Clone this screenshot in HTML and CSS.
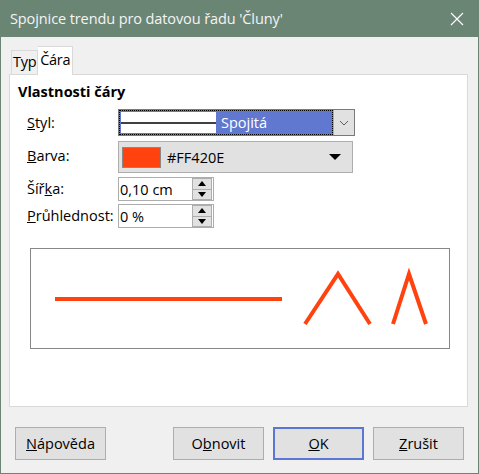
FILE: index.html
```html
<!DOCTYPE html>
<html lang="cs">
<head>
<meta charset="utf-8">
<link rel="stylesheet" href="styles.css">
</head>
<body>
<div class="window">
  <div class="titlebar">
    <span class="title">Spojnice trendu pro datovou řadu 'Čluny'</span>
    <svg class="close" width="14" height="14" viewBox="0 0 14 14"><path d="M1 1 L13 13 M13 1 L1 13" stroke="#ffffff" stroke-width="1.2" fill="none"/></svg>
  </div>
  <div class="content">
    <div class="tabs">
      <div class="tab">Typ</div>
      <div class="tab active">Čára</div>
    </div>
    <div class="panel">
      <div class="heading">Vlastnosti čáry</div>
      <div class="form">
        <label class="lbl r1"><u>S</u>tyl:</label>
        <div class="combo">
          <div class="combo-sel">
            <div class="preview-line"><span class="pl"></span></div>
            <span class="combo-text">Spojitá</span>
          </div>
          <div class="combo-btn"><svg width="10" height="6" viewBox="0 0 10 6"><path d="M1 1 L5 5 L9 1" stroke="#606060" stroke-width="1" fill="none"/></svg></div>
        </div>
        <label class="lbl r2"><u>B</u>arva:</label>
        <div class="colorbox">
          <span class="swatch"></span>
          <span class="ctext">#FF420E</span>
          <svg class="carrow" width="12" height="6" viewBox="0 0 12 6"><path d="M0 0 H12 L6 6 Z" fill="#000"/></svg>
        </div>
        <label class="lbl r3">Šíř<u>k</u>a:</label>
        <div class="spin s1">
          <span class="sval">0,10 cm</span>
          <div class="sbtns">
            <div class="sb"><svg width="8" height="5" viewBox="0 0 8 5"><path d="M0 5 H8 L4 0 Z" fill="#000"/></svg></div>
            <div class="sb"><svg width="8" height="5" viewBox="0 0 8 5"><path d="M0 0 H8 L4 5 Z" fill="#000"/></svg></div>
          </div>
        </div>
        <label class="lbl r4"><u>P</u>růhlednost:</label>
        <div class="spin">
          <span class="sval">0 %</span>
          <div class="sbtns">
            <div class="sb"><svg width="8" height="5" viewBox="0 0 8 5"><path d="M0 5 H8 L4 0 Z" fill="#000"/></svg></div>
            <div class="sb"><svg width="8" height="5" viewBox="0 0 8 5"><path d="M0 0 H8 L4 5 Z" fill="#000"/></svg></div>
          </div>
        </div>
      </div>
      <div class="previewbox">
        <svg width="418" height="99" viewBox="0 0 418 99">
          <g stroke="#FF420E" stroke-width="4" fill="none" stroke-linejoin="miter">
            <path d="M24 50 H251"/>
            <path d="M274 75 L307 25 L339 75"/>
            <path d="M362 75 L378 25 L395 75"/>
          </g>
        </svg>
      </div>
    </div>
    <div class="buttons">
      <button class="btn"><u>N</u>ápověda</button>
      <div class="spacer"></div>
      <button class="btn">O<u>b</u>novit</button>
      <button class="btn default"><u>O</u>K</button>
      <button class="btn"><u>Z</u>rušit</button>
    </div>
  </div>
</div>
</body>
</html>
```
FILE: styles.css
```css
* { box-sizing: border-box; }
html, body { margin: 0; padding: 0; }
body {
  width: 479px;
  height: 474px;
  font-family: "Open Sans", "Noto Sans", sans-serif;
  font-size: 14.5px;
  color: #000;
  background: #f0f0f0;
}
.window {
  width: 479px;
  height: 474px;
  display: flex;
  flex-direction: column;
  background: #f0f0f0;
  border: 1px solid #6b8575;
  border-top: none;
}
.titlebar {
  height: 37px;
  background: #6b8575;
  display: flex;
  align-items: center;
  padding: 0 14px 0 9px;
  flex: none;
}
.title {
  color: #f4f4f4;
  font-size: 14.5px;
  flex: 1;
  letter-spacing: -0.1px;
}
.close { display: block; }
.content {
  flex: 1;
  display: flex;
  flex-direction: column;
  padding: 9px 10px 0 8px;
}
.tabs {
  display: flex;
  align-items: flex-end;
  height: 28px;
  padding-left: 2px;
  position: relative;
  z-index: 1;
}
.tab {
  height: 24px;
  padding: 0 1px;
  border: 1px solid #d9d9d9;
  border-bottom: none;
  background: #f0f0f0;
  line-height: 22px;
  font-size: 14.5px;
  letter-spacing: -0.3px;
}
.tab.active {
  height: 29px;
  background: #ffffff;
  border-left: none;
  padding: 0 2px 0 2px;
  line-height: 26px;
  margin-bottom: -1px;
}
.panel {
  height: 333px;
  background: #ffffff;
  border: 1px solid #d9d9d9;
  padding: 0 0 0 8px;
}
.heading {
  font-weight: bold;
  font-size: 14.5px;
  margin-top: 8px;
  line-height: 18px;
  height: 18px;
}
.form {
  margin-top: 8px;
  display: grid;
  grid-template-columns: 91px auto;
  grid-template-rows: 27px 32px 24px 24px;
  row-gap: 4px;
  padding-left: 9px;
  align-items: center;
}
.form .r3 { margin-top: 2px; }
.lbl { font-size: 14.5px; line-height: 18px; }
.combo {
  width: 237px;
  height: 27px;
  border: 1px solid #7a7a7a;
  display: flex;
  background: #ffffff;
}
.combo-sel {
  flex: 1;
  display: flex;
  align-items: center;
  background: #6078d0;
  border: 1px dotted #000;
  padding: 1px;
}
.preview-line {
  width: 95px;
  height: 21px;
  background: #ffffff;
  display: flex;
  align-items: center;
}
.pl {
  display: block;
  width: 100%;
  height: 2px;
  background: #404040;
}
.combo-text {
  color: #ffffff;
  margin-left: 5px;
}
.combo-btn {
  width: 21px;
  background: #e1e1e1;
  border-left: 1px solid #adadad;
  display: flex;
  align-items: center;
  justify-content: center;
}
.colorbox {
  width: 235px;
  height: 32px;
  background: #e1e1e1;
  border: 1px solid #adadad;
  display: flex;
  align-items: center;
  padding: 0 11px 0 3px;
  margin-top: 2px;
}
.swatch {
  width: 39px;
  height: 21px;
  background: #FF420E;
  border: 1px solid #888;
}
.ctext { margin-left: 6px; flex: 1; }
.carrow { display: block; }
.spin {
  width: 96px;
  height: 24px;
  border: 1px solid #adadad;
  background: #fff;
  display: flex;
  align-items: center;
  padding-left: 1px;
}
.spin.s1 { margin-top: 2px; }
.sval { flex: 1; }
.sbtns {
  width: 20px;
  height: 22px;
  display: flex;
  flex-direction: column;
  margin-right: 1px;
}
.sb {
  flex: 1;
  background: #e1e1e1;
  border: 1px solid #adadad;
  display: flex;
  align-items: center;
  justify-content: center;
}
.sb + .sb { border-top: none; }
.previewbox {
  margin: 20px 0 0 12px;
  width: 420px;
  height: 101px;
  border: 1px solid #888888;
  background: #fff;
}
.previewbox svg { display: block; }
.buttons {
  display: flex;
  margin-top: 20px;
  padding: 0 4px 0 6px;
  gap: 9px;
}
.spacer { flex: 1; }
.btn {
  width: 91px;
  height: 33px;
  background: #e1e1e1;
  border: 1px solid #adadad;
  font-family: "Open Sans", "Noto Sans", sans-serif;
  font-size: 14.5px;
  color: #000;
  padding: 0;
}
.btn.default {
  border: 2px solid #5b76d4;
}
```
